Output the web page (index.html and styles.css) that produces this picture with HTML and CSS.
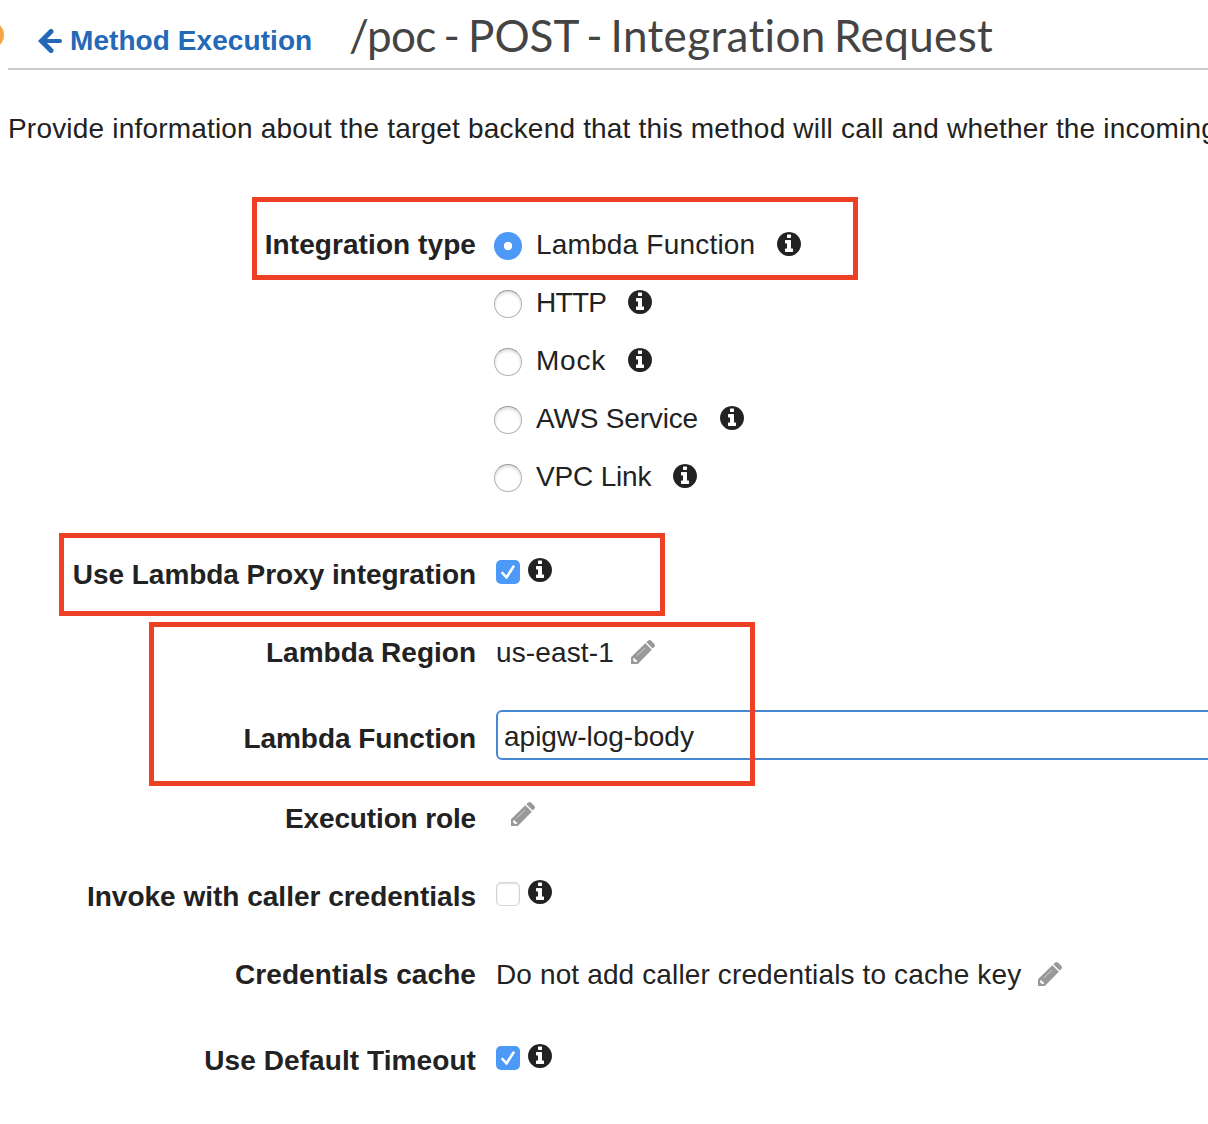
FILE: index.html
```
<!DOCTYPE html>
<html lang="en">
<head>
<meta charset="utf-8">
<title>Integration Request</title>
<link rel="stylesheet" href="styles.css">
</head>
<body>
<svg class="defs" aria-hidden="true">
  <symbol id="info" viewBox="128 128 1536 1536"><path d="M1152 1376v-160q0-14-9-23t-23-9h-96v-512q0-14-9-23t-23-9h-320q-14 0-23 9t-9 23v160q0 14 9 23t23 9h96v320h-96q-14 0-23 9t-9 23v160q0 14 9 23t23 9h448q14 0 23-9t9-23zm-128-896v-160q0-14-9-23t-23-9h-192q-14 0-23 9t-9 23v160q0 14 9 23t23 9h192q14 0 23-9t9-23zm640 416q0 209-103 385.500t-279.500 279.500-385.500 103-385.500-103-279.500-279.500-103-385.500 103-385.500 279.500-279.500 385.500-103 385.500 103 279.500 279.500 103 385.500z"/></symbol>
  <symbol id="pencil" viewBox="0 0 24 24">
    <path d="M0 24V17.200L14.300 3.200L20.800 9.700L6.800 24z"/>
    <path d="M15.300 2.200L17.200 .6Q18.600 -.6 20 .6L23.400 4Q24.600 5.400 23.400 6.800L21.700 8.600z"/>
    <path class="cut" d="M2.600 18L4.200 18.500L4.400 20L6 20.300L6.200 21.600L4.200 22.200L2 20.300z"/>
    <path class="shine" d="M5.600 16.200L14 8"/>
  </symbol>
</svg>
<main class="page">
  <header class="header">
    <a class="back">
      <svg class="arrow" viewBox="0 0 24 24"><path d="M13 2.500L3.500 12L13 21.500" stroke-width="5"/><path d="M5 12H22" stroke-width="4"/></svg>
      <span>Method Execution</span>
    </a>
    <h1 class="title"><span class="path">/poc</span> - POST - <span class="name">Integration Request</span></h1>
    <span class="step"></span>
  </header>
  <p class="intro">Provide information about the target backend that this method will call and whether the incoming</p>
  <form class="form">
    <div class="row"><span class="label loose">Integration type</span><label class="option"><i class="radio checked"></i><span class="name-lambda">Lambda Function</span><svg class="info"><use href="#info"/></svg></label></div>
    <div class="row"><span></span><label class="option"><i class="radio"></i><span class="name-http">HTTP</span><svg class="info"><use href="#info"/></svg></label></div>
    <div class="row"><span></span><label class="option"><i class="radio"></i><span class="name-mock">Mock</span><svg class="info"><use href="#info"/></svg></label></div>
    <div class="row"><span></span><label class="option"><i class="radio"></i><span class="name-aws">AWS Service</span><svg class="info"><use href="#info"/></svg></label></div>
    <div class="row types-end"><span></span><label class="option"><i class="radio"></i><span class="name-aws">VPC Link</span><svg class="info"><use href="#info"/></svg></label></div>
    <div class="row proxy"><span class="label snug">Use Lambda Proxy integration</span><div class="toggle"><i class="check on"><svg viewBox="0 0 24 24"><path d="M6.500 13L10.500 17.500L17.500 6.500"/></svg></i><svg class="info"><use href="#info"/></svg></div></div>
    <div class="row region"><span class="label">Lambda Region</span><div class="value"><span>us-east-1</span><svg class="pencil"><use href="#pencil"/></svg></div></div>
    <div class="row function"><span class="label snug">Lambda Function</span><div class="field">apigw-log-body</div></div>
    <div class="row role"><span class="label tight">Execution role</span><div class="value"><svg class="pencil"><use href="#pencil"/></svg></div></div>
    <div class="row invoke"><span class="label">Invoke with caller credentials</span><div class="toggle"><i class="check"></i><svg class="info"><use href="#info"/></svg></div></div>
    <div class="row cache"><span class="label loose">Credentials cache</span><div class="value"><span>Do not add caller credentials to cache key</span><svg class="pencil"><use href="#pencil"/></svg></div></div>
    <div class="row"><span class="label loose">Use Default Timeout</span><div class="toggle"><i class="check on"><svg viewBox="0 0 24 24"><path d="M6.500 13L10.500 17.500L17.500 6.500"/></svg></i><svg class="info"><use href="#info"/></svg></div></div>
  </form>
  <div class="mark mark-type"></div>
  <div class="mark mark-proxy"></div>
  <div class="mark mark-lambda"></div>
</main>
</body>
</html>
```
FILE: styles.css
```
* { box-sizing: border-box; }
body { margin: 0; background: #fff; color: #222; font: 28px/42px "Liberation Sans", Arial, sans-serif; overflow: hidden; }
.defs { position: absolute; width: 0; height: 0; }
.page { position: relative; width: 1208px; height: 1124px; overflow: hidden; }
.header { display: flex; height: 70px; margin-left: 8px; padding-left: 30px; border-bottom: 2px solid #ccc; }
.back { display: flex; width: 311px; padding-top: 20px; gap: 8px; color: #2468b8; font-weight: bold; letter-spacing: .07px; white-space: nowrap; }
.arrow { width: 24px; height: 24px; margin-top: 9px; fill: none; stroke: #2468b8; stroke-linecap: round; flex: none; }
.title { margin: 0; padding-top: 5px; color: #444; font: 400 44px/60px Lato, sans-serif; font-variant-ligatures: none; word-spacing: -3.200px; white-space: nowrap; }
.path { letter-spacing: -.7px; }
.name { letter-spacing: .36px; }
.step { position: absolute; left: -24px; top: 21px; width: 28px; height: 28px; border-radius: 50%; background: #f8a545; }
.intro { height: 40px; margin: 38px 0 0 8px; letter-spacing: .19px; white-space: nowrap; }
.form { margin-top: 76px; }
.row { display: grid; grid-template-columns: 476px 1fr; column-gap: 20px; height: 40px; margin-bottom: 18px; white-space: nowrap; }
.label { font-weight: bold; text-align: right; }
.loose { letter-spacing: .08px; }
.snug { letter-spacing: -.05px; }
.tight { letter-spacing: -.14px; }
.types-end { margin-bottom: 58px; }
.proxy { margin-bottom: 38px; }
.region { margin-bottom: 46px; }
.function { margin-bottom: 40px; }
.role, .invoke { margin-bottom: 38px; }
.cache { margin-bottom: 46px; }
.option, .toggle, .value { display: flex; }
.value { letter-spacing: .13px; }
.option { margin-left: -2px; }
.name-lambda { letter-spacing: .2px; }
.name-http { letter-spacing: -.7px; }
.name-mock { letter-spacing: .75px; }
.name-aws { letter-spacing: -.18px; }
.radio { width: 28px; height: 28px; margin: 8px 14px 0 0; border: 1px solid #b4b4b4; border-top-color: #999; border-radius: 50%; background: #fff; box-shadow: inset 0 2px 3px #ddd; flex: none; }
.radio.checked { border: 0; background: radial-gradient(circle, #fff 3.800px, #4d99f7 4.600px); box-shadow: none; }
.info { width: 24px; height: 24px; fill: #222; flex: none; }
.option .info { margin: 8px 0 0 22px; }
.toggle .info { margin: 4px 0 0 8px; }
.check { width: 24px; height: 24px; margin-top: 6px; border: 1px solid #d4d4d4; border-radius: 5px; box-shadow: inset 0 1px 2px #ddd; }
.check.on { border: 0; background: #4d99f7; box-shadow: none; }
.check svg { display: block; fill: none; stroke: #fff; stroke-width: 2.600; stroke-linecap: round; stroke-linejoin: round; }
.pencil { width: 24px; height: 24px; margin: 8px 0 0 17px; fill: #999; flex: none; }
.cut { fill: #fff; }
.shine { fill: none; stroke: #ccc; stroke-width: 1; }
.role .pencil { margin: 4px 0 0 15px; }
.field { width: 760px; height: 50px; margin-top: -8px; padding: 4px 6px; border: 2px solid #4788d6; border-radius: 6px; }
.mark { position: absolute; border: 5px solid #ee4025; }
.mark-type { left: 252px; top: 197px; width: 606px; height: 83px; }
.mark-proxy { left: 59px; top: 533px; width: 606px; height: 83px; }
.mark-lambda { left: 149px; top: 622px; width: 606px; height: 164px; }
```
